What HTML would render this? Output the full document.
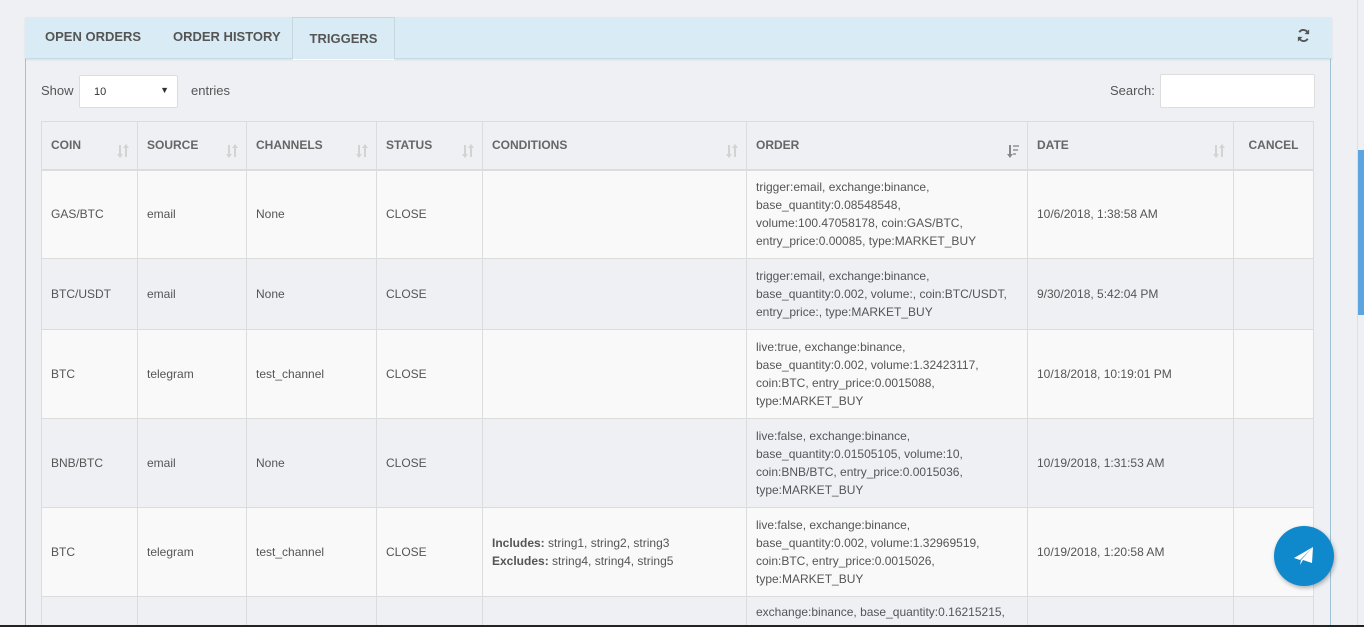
<!DOCTYPE html>
<html><head><meta charset="utf-8"><style>
*{box-sizing:border-box;margin:0;padding:0}
html,body{width:1364px;height:627px;overflow:hidden}
body{background:#eff0f4;font-family:"Liberation Sans",sans-serif;font-size:12px;color:#555;position:relative}
.panel{position:absolute;left:25px;top:17px;width:1306px;height:620px;border-left:1px solid #9fc3d6;border-right:1px solid #9fc3d6}
.tabs{position:absolute;left:25px;top:17px;width:1307px;height:42px;background:#d9ecf5;border-bottom:1px solid #c6dbe6;box-shadow:0 1px 2px rgba(0,0,0,.08)}
.tab{position:absolute;top:0;height:42px;line-height:40px;font-weight:bold;font-size:13px;color:#555}
.tab.act{background:#d9ecf5;border:1px solid #c9d6de;border-bottom:1px solid #fff;height:43px}
.show{position:absolute;left:41px;top:83px;font-size:13px}
.sel{position:absolute;left:79px;top:75px;width:99px;height:33px;background:#fff;border:1px solid #ddd;border-radius:2px;font-size:11px;padding:10px 0 0 14px;color:#333}
.sel:after{content:"▼";position:absolute;right:8px;top:9px;font-size:9px;color:#333}
.ent{position:absolute;left:191px;top:83px;font-size:13px}
.srch{position:absolute;left:1110px;top:83px;font-size:13px}
.sbox{position:absolute;left:1160px;top:74px;width:155px;height:34px;background:#fff;border:1px solid #ddd;border-radius:2px}
table{position:absolute;left:41px;top:121px;border-collapse:collapse;table-layout:fixed;width:1272px;border:1px solid #dcdcdc}
td,th{border:1px solid #dcdcdc;padding:0 9px;vertical-align:middle;text-align:left;line-height:18px}
th{height:48px;font-weight:bold;color:#666;vertical-align:top;padding-top:14px;position:relative;background:#eff0f4;border-bottom:2px solid #dcdcdc}
th svg{position:absolute;right:8px;top:22px}
tr.o td{background:#f9f9f9}
tr.e td{background:#eff0f4}
.fab{position:absolute;left:1274px;top:526px;width:60px;height:60px;border-radius:50%;background:#0f88cc;box-shadow:1px 2px 4px rgba(0,0,0,.3)}
.sb{position:absolute;left:1357px;top:0;width:7px;height:627px;background:#eef0f4;border-left:1px solid #dde}
.th{position:absolute;left:1358px;top:150px;width:6px;height:165px;background:#5da5e0}
.bl{position:absolute;left:0;top:625px;width:1364px;height:2px;background:#222}
</style></head><body>
<svg width="0" height="0" style="position:absolute"><defs>
<symbol id="srt" viewBox="0 0 12 14"><path d="M2 1v9H0l3 4 3-4H4V1z M8 13V4H6l3-4 3 4h-2v9z" fill="#d3d3d3"/></symbol>
<symbol id="srd" viewBox="0 0 12 14"><path d="M2 1v9H0l3 4 3-4H4V1z" fill="#888"/><path d="M6 1h6v2H6z M6 5h5v2H6z M6 9h3v2H6z" fill="#aaa"/></symbol>
</defs></svg>
<div class="panel"></div>
<div class="tabs">
<div class="tab" style="left:20px">OPEN ORDERS</div>
<div class="tab" style="left:148px">ORDER HISTORY</div>
<div class="tab act" style="left:267px;width:103px;text-align:center;line-height:42px">TRIGGERS</div>
<svg style="position:absolute;left:1271px;top:11px" width="15" height="15" viewBox="0 0 16 16"><path d="M13 6.5A5.2 5.2 0 0 0 3.5 4.5M3 9.5a5.2 5.2 0 0 0 9.5 2" fill="none" stroke="#555" stroke-width="2"/><path d="M14 1.5v5h-5z M2 14.5v-5h5z" fill="#555"/></svg>
</div>
<div class="show">Show</div><div class="sel">10</div><div class="ent">entries</div>
<div class="srch">Search:</div><div class="sbox"></div>
<table>
<colgroup><col style="width:96px"><col style="width:109px"><col style="width:130px"><col style="width:106px"><col style="width:264px"><col style="width:281px"><col style="width:206px"><col style="width:80px"></colgroup>
<tr><th>COIN<svg width="12" height="14"><use href="#srt"/></svg></th><th>SOURCE<svg width="12" height="14"><use href="#srt"/></svg></th><th>CHANNELS<svg width="12" height="14"><use href="#srt"/></svg></th><th>STATUS<svg width="12" height="14"><use href="#srt"/></svg></th><th>CONDITIONS<svg width="12" height="14"><use href="#srt"/></svg></th><th>ORDER<svg width="12" height="14"><use href="#srd"/></svg></th><th>DATE<svg width="12" height="14"><use href="#srt"/></svg></th><th style="text-align:center">CANCEL</th></tr>
<tr class="o" style="height:89px"><td>GAS/BTC</td><td>email</td><td>None</td><td>CLOSE</td><td></td><td>trigger:email, exchange:binance, base_quantity:0.08548548, volume:100.47058178, coin:GAS/BTC, entry_price:0.00085, type:MARKET_BUY</td><td>10/6/2018, 1:38:58 AM</td><td></td></tr>
<tr class="e" style="height:71px"><td>BTC/USDT</td><td>email</td><td>None</td><td>CLOSE</td><td></td><td>trigger:email, exchange:binance, base_quantity:0.002, volume:, coin:BTC/USDT, entry_price:, type:MARKET_BUY</td><td>9/30/2018, 5:42:04 PM</td><td></td></tr>
<tr class="o" style="height:89px"><td>BTC</td><td>telegram</td><td>test_channel</td><td>CLOSE</td><td></td><td>live:true, exchange:binance, base_quantity:0.002, volume:1.32423117, coin:BTC, entry_price:0.0015088, type:MARKET_BUY</td><td>10/18/2018, 10:19:01 PM</td><td></td></tr>
<tr class="e" style="height:89px"><td>BNB/BTC</td><td>email</td><td>None</td><td>CLOSE</td><td></td><td>live:false, exchange:binance, base_quantity:0.01505105, volume:10, coin:BNB/BTC, entry_price:0.0015036, type:MARKET_BUY</td><td>10/19/2018, 1:31:53 AM</td><td></td></tr>
<tr class="o" style="height:89px"><td>BTC</td><td>telegram</td><td>test_channel</td><td>CLOSE</td><td><b>Includes:</b> string1, string2, string3<br><b>Excludes:</b> string4, string4, string5</td><td>live:false, exchange:binance, base_quantity:0.002, volume:1.32969519, coin:BTC, entry_price:0.0015026, type:MARKET_BUY</td><td>10/19/2018, 1:20:58 AM</td><td></td></tr>
<tr class="e" style="height:60px"><td></td><td></td><td></td><td></td><td></td><td style="vertical-align:top;padding-top:6px">exchange:binance, base_quantity:0.16215215,</td><td></td><td></td></tr>
</table>
<div class="fab"><svg style="position:absolute;left:17px;top:17px" width="26" height="26" viewBox="0 0 26 26"><path d="M22 4L3 15l6 2z" fill="#fff"/><path d="M22 4L10 17l2 0 9 3z" fill="#fff"/><path d="M10 17l-1 5 3-5z" fill="#fff"/></svg></div>
<div class="sb"></div><div class="th"></div>
<div class="bl"></div>
</body></html>
